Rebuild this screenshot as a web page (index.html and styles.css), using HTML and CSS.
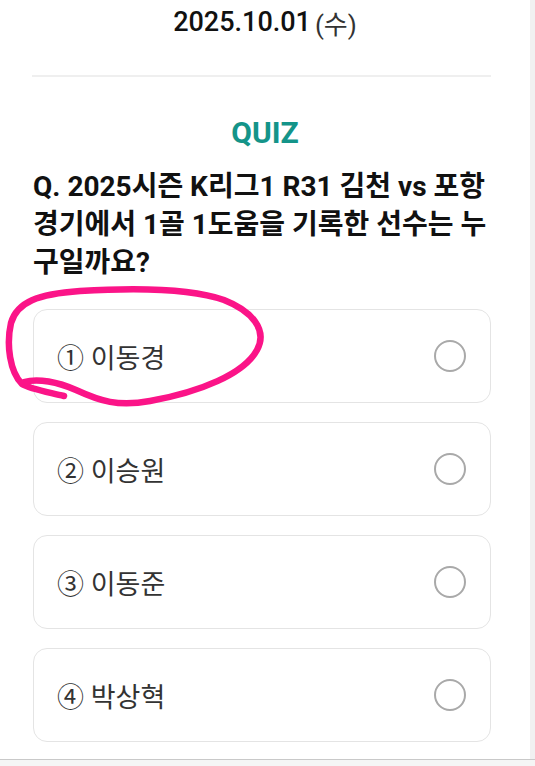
FILE: index.html
```html
<!DOCTYPE html>
<html lang="ko">
<head>
<meta charset="utf-8">
<link rel="stylesheet" href="styles.css">
</head>
<body>
<div class="screen">
  <div class="layout">
    <main class="content">
      <div class="date"><span class="date-num">2025.10.01</span><span class="date-day">(수)</span></div>
      <hr class="divider">
      <h2 class="quiz-title">QUIZ</h2>
      <p class="question">Q. 2025시즌 K리그1 R31 김천 vs 포항 경기에서 1골 1도움을 기록한 선수는 누구일까요?</p>
      <ul class="options">
        <li class="option"><span class="option-label">① 이동경</span><span class="radio"></span></li>
        <li class="option"><span class="option-label">② 이승원</span><span class="radio"></span></li>
        <li class="option"><span class="option-label">③ 이동준</span><span class="radio"></span></li>
        <li class="option"><span class="option-label">④ 박상혁</span><span class="radio"></span></li>
      </ul>
    </main>
    <div class="rail"></div>
  </div>
  <div class="bottom-bar"></div>
  <svg class="annotation" width="535" height="766" viewBox="0 0 535 766">
    <path d="M 64 396 C 48 392, 30 389, 22 384 C 10 372, 6 345, 11 323 C 17 302, 38 294, 80 291 C 130 288, 190 288, 224 300 C 252 311, 268 330, 257 350 C 244 374, 200 392, 150 401 C 118 407, 100 401, 76 390 C 58 382, 38 378, 24 382"
      fill="none" stroke="#fb1488" stroke-width="6.5" stroke-linecap="round" stroke-linejoin="round"/>
  </svg>
</div>
</body>
</html>
```

FILE: styles.css
```css
* { box-sizing: border-box; }
html, body { margin: 0; padding: 0; background: #ffffff; }
body { font-family: Roboto, "Noto Sans CJK KR", sans-serif; }
.screen { position: relative; width: 535px; height: 766px; overflow: hidden; background: #fff; }
.layout { display: flex; height: 759px; }
.content { flex: 1; }
.rail { width: 5px; background: #f1f1f1; }
.bottom-bar { height: 7px; border-top: 1px solid #c9c9c9; background: #f5f5f5; }

.date { height: 44px; display: flex; align-items: center; justify-content: center; gap: 4px; color: #111; }
.date-num { font-size: 27px; font-weight: 500; }
.date-day { font-size: 26px; font-weight: 400; color: #333; }

.divider { margin: 31px 0 0 32px; width: 459px; border: 0; height: 2px; background: #efefef; }

.quiz-title { margin: 39px 0 0; font-size: 30px; line-height: 34px; font-weight: 700; color: #149489; text-align: center; }

.question { margin: 18px 0 0 33px; width: 462px; font-size: 28px; line-height: 38px; font-weight: 700; color: #111; }

.options { list-style: none; margin: 27px 0 0 33px; padding: 0; width: 458px; display: flex; flex-direction: column; gap: 19px; }
.option { height: 94px; border: 1.5px solid #e4e4e4; border-radius: 14px; display: flex; align-items: center; justify-content: space-between; padding: 0 24px 0 23px; }
.option-label { font-size: 27px; color: #333; font-weight: 400; }
.radio { width: 32px; height: 32px; border: 2px solid #a9a9a9; border-radius: 50%; }

.annotation { position: absolute; left: 0; top: 0; pointer-events: none; }
```
